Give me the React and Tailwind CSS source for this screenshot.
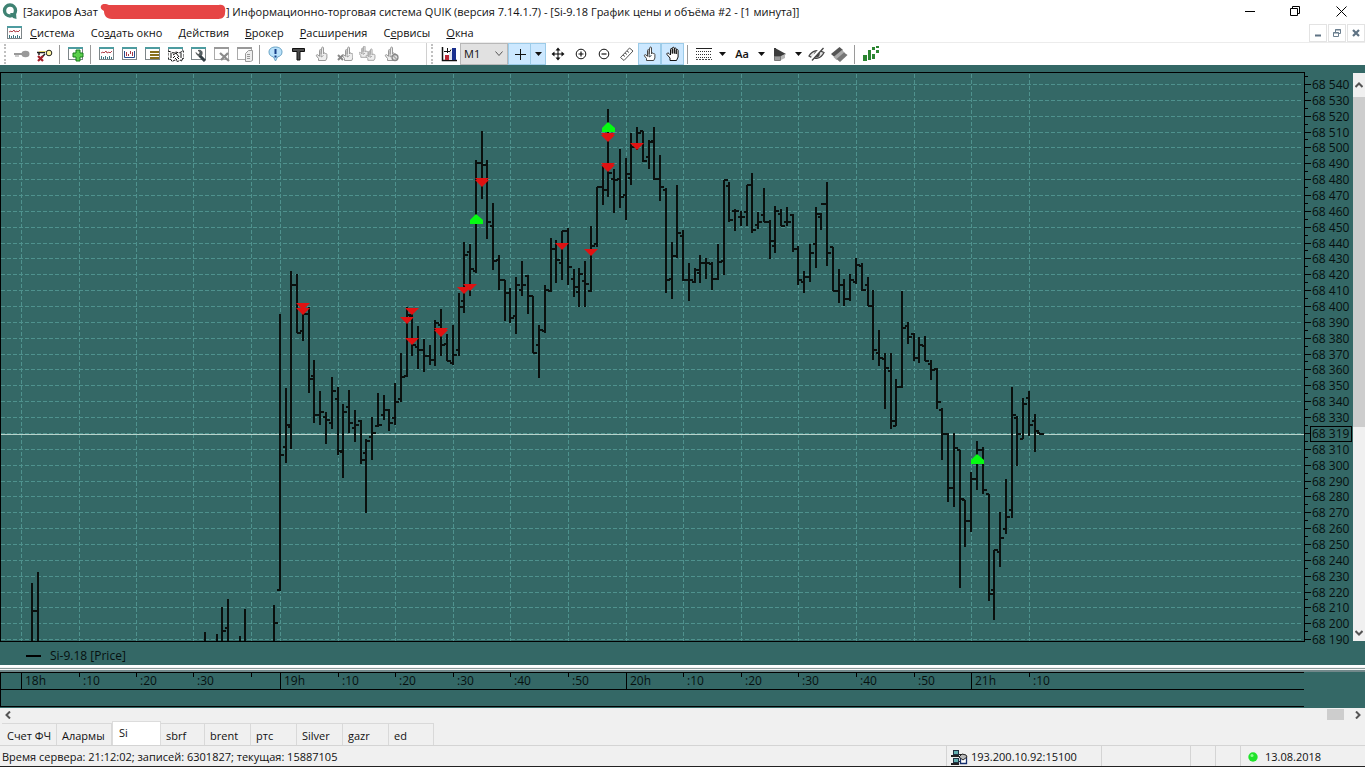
import React from "react";

/* [x, high, low, open, close] in plot pixels */
const BARS = [
  [32, 583, 642, null, 611], [38, 572, 642, 611, null], [205, 632, 642], [217, 634, 642], [222, 607, 642, null, 631],
  [228, 599, 642, 628, null], [240, 636, 642], [245, 609, 642], [274, 605, 642, null, 623],
  [280, 314, 591, 590, 455], [286, 388, 463, 447, 425], [291, 271, 449, 427, 285], [297, 274, 333, 285, 333],
  [303, 310, 341, 331, 314], [309, 307, 393, 314, 379], [314, 360, 423, 376, 415], [320, 391, 425, 415, 412],
  [326, 412, 444, 417, 420], [332, 377, 429, 423, 391], [338, 387, 455, 399, 451], [343, 404, 478, 452, 412],
  [349, 390, 433, 407, 423], [355, 410, 442, 428, 425], [361, 420, 464, 421, 460], [366, 439, 513, 453, 441],
  [372, 417, 460, 437, 433], [378, 393, 427, 426, 425], [384, 395, 420, 415, 410], [389, 409, 431, 410, 423],
  [395, 383, 425, 418, 402], [401, 353, 402, 399, 377], [407, 307, 377, 376, 315], [412, 313, 356, 316, 345],
  [418, 326, 369, 347, 350], [424, 339, 372, 350, 356], [430, 345, 365, 356, 360], [435, 320, 366, 360, 323],
  [441, 309, 356, 325, 345], [447, 334, 361, 344, 361], [453, 325, 365, 363, 355], [459, 293, 356, 350, 307],
  [464, 242, 313, 301, 255], [470, 244, 296, 252, 269], [476, 160, 273, 271, 163], [482, 131, 199, 163, 165],
  [487, 160, 239, 165, 222], [493, 203, 270, 226, 261], [499, 255, 290, 260, 280], [505, 280, 321, 280, 293],
  [510, 288, 323, 293, 318], [516, 277, 334, 316, 285], [522, 261, 296, 290, 285], [528, 275, 314, 276, 296],
  [533, 296, 353, 296, 353], [539, 325, 378, 345, 330], [545, 285, 333, 331, 290], [551, 238, 292, 291, 249],
  [556, 240, 283, 249, 260], [562, 231, 280, 263, 231], [568, 228, 285, 231, 267], [574, 269, 297, 279, 287],
  [579, 268, 307, 292, 274], [585, 261, 307, 281, 284], [591, 226, 292, 291, 246], [597, 187, 247, 244, 187],
  [603, 165, 205, 187, 190], [608, 109, 197, 190, 173], [614, 169, 213, 179, 180], [620, 149, 208, 179, 197],
  [626, 158, 220, 195, 174], [631, 133, 185, 178, 147], [637, 127, 150, 147, 133], [643, 131, 162, 131, 161],
  [649, 140, 169, 157, 142], [654, 127, 180, 141, 179], [660, 155, 201, 179, 187], [666, 188, 293, 190, 280],
  [672, 242, 299, 279, 256], [677, 185, 258, 256, 233], [683, 230, 281, 236, 280], [689, 263, 301, 280, 280],
  [695, 268, 283, 282, 270], [700, 255, 283, 273, 263], [706, 258, 279, 263, 263], [712, 262, 290, 264, 279],
  [718, 244, 280, 279, 262], [724, 180, 275, 261, 180], [729, 182, 222, 186, 220], [735, 209, 231, 211, 211],
  [741, 211, 226, 217, 217], [747, 185, 226, 212, 185], [752, 173, 233, 185, 230], [758, 212, 229, 225, 222],
  [764, 188, 222, 215, 222], [770, 220, 259, 222, 241], [775, 206, 253, 246, 211], [781, 209, 226, 214, 226],
  [787, 207, 226, 222, 222], [793, 214, 252, 215, 249], [798, 246, 285, 249, 280], [804, 271, 293, 282, 277],
  [810, 244, 282, 277, 253], [816, 207, 268, 244, 214], [821, 213, 230, 217, 204], [827, 182, 266, 204, 253],
  [833, 247, 291, 247, 291], [839, 269, 303, 291, 285], [844, 279, 306, 285, 299], [850, 274, 301, 299, 280],
  [856, 258, 284, 282, 265], [862, 263, 291, 266, 290], [868, 277, 306, 285, 306], [873, 290, 360, 306, 350],
  [879, 330, 366, 353, 358], [885, 353, 409, 359, 368], [891, 353, 429, 371, 421], [896, 379, 426, 426, 387],
  [902, 291, 388, 387, 328], [908, 322, 344, 326, 337], [914, 333, 361, 334, 358], [919, 337, 363, 358, 345],
  [925, 336, 361, 346, 361], [931, 360, 380, 364, 370], [937, 368, 409, 369, 402], [942, 408, 460, 410, 434],
  [948, 433, 502, 434, 488], [954, 433, 507, 488, 448], [960, 450, 588, 450, 499], [965, 500, 547, 500, 521],
  [971, 472, 532, 521, 479], [977, 441, 490, 479, 450], [983, 447, 494, 450, 490], [989, 494, 601, 494, 594],
  [994, 550, 620, 590, 550], [1000, 512, 567, 552, 538], [1006, 479, 534, 529, 517], [1012, 387, 518, 510, 415],
  [1017, 416, 466, 418, 434], [1023, 398, 439, 439, 404], [1029, 391, 436, 398, 425], [1035, 414, 452, 421, 431],
  [1040, 433, 435, 433, 434],
];

const BAR_PATH = BARS.map(([x, h, l, o, c]) => {
  let d = `M${x} ${h}V${l}`;
  if (o != null) d += `M${x - 3} ${o}H${x}`;
  if (c != null) d += `M${x} ${c}H${x + 4}`;
  return d;
}).join("");

const TIMES = [
  [21, "18h"], [79, ":10"], [136, ":20"], [193, ":30"], [251, ""], [280, "19h"], [338, ":10"], [395, ":20"],
  [453, ":30"], [510, ":40"], [568, ":50"], [626, "20h"], [683, ":10"], [741, ":20"], [798, ":30"], [856, ":40"],
  [914, ":50"], [971, "21h"], [1029, ":10"],
];

const PRICES = Array.from({ length: 36 }, (_, i) => ({
  y: Math.round(84 + i * 15.86),
  label: i === 22 ? "68 319" : `68 ${540 - i * 10}`,
}));

const SELLS = [
  [303, 303], [303, 308], [412, 308], [407, 317], [412, 338], [441, 328], [441, 330], [464, 287], [470, 284],
  [482, 178], [482, 180], [562, 243], [591, 249], [608, 133], [608, 135], [608, 163], [608, 165], [637, 143],
];
const BUYS = [[476, 214], [608, 122], [977, 454]];

function PricePlot() {
  return (
    <svg className="block h-[570px] min-w-0 flex-1" viewBox="0 72 1305 570" preserveAspectRatio="xMinYMin slice" role="img" aria-label="Si-9.18 [Price]">
      <g shapeRendering="crispEdges">
        <g stroke="#4f928e" strokeWidth="1" strokeDasharray="4 2">
          {PRICES.map((p) => <line key={p.y} x1="1" x2="1302" y1={p.y + 0.5} y2={p.y + 0.5} />)}
          {TIMES.map(([x]) => <line key={x} x1={x + 0.5} x2={x + 0.5} y1="74" y2="641" />)}
        </g>
        <path d="M0 434.5H1304" stroke="#b9d3cb" strokeWidth="1" />
        <path d={BAR_PATH} stroke="#0a100e" strokeWidth="2" fill="none" />
        <path d="M0.5 641V72.5H1304.5V641.5H0" stroke="#000" fill="none" />
      </g>
      {SELLS.map(([x, y]) => <path key={`${x}-${y}`} d={`M${x - 7} ${y}H${x + 7}L${x} ${y + 7}Z`} fill="#e01212" />)}
      {BUYS.map(([x, y]) => <path key={x} d={`M${x} ${y}L${x + 7} ${y + 6}V${y + 10}H${x - 6}V${y + 6}Z`} fill="#06fb12" />)}
    </svg>
  );
}

function PriceAxis() {
  return (
    <svg className="block h-[576px] w-12 shrink-0" viewBox="1305 72 48 576" role="img" aria-label="Шкала цены">
      <g shapeRendering="crispEdges" stroke="#000">
        {PRICES.map((p) => (
          <React.Fragment key={p.y}>
            <path d={`M1305 ${p.y + 0.5}h6`} />
            <path d={`M1305 ${p.y - 7.5}h3`} />
          </React.Fragment>
        ))}
        <path d="M1310.5 426.5h41v15h-41z" fill="none" />
      </g>
      {PRICES.map((p) => (
        <text key={p.y} x="1312" y={p.y + 5} fill="#06100f" className="font-['Open_Sans',sans-serif] text-[12px]">{p.label}</text>
      ))}
    </svg>
  );
}

function TimeAxis() {
  return (
    <svg className="block h-[36px] w-full" viewBox="0 672 1365 36" preserveAspectRatio="xMinYMin slice" role="img" aria-label="Шкала времени">
      <g shapeRendering="crispEdges" stroke="#000">
        <path d="M0.5 672V707M0 672.5H1304M0 689.5H1304M0 706.5H1304" fill="none" />
        {TIMES.map(([x, t]) => <path key={x} d={`M${x + 0.5} 672V${t.endsWith("h") ? 689 : 677}`} />)}
      </g>
      {TIMES.map(([x, t]) => (
        <text key={x} x={x + 4} y="685" fill="#06100f" className="font-['Open_Sans',sans-serif] text-[12px]">{t}</text>
      ))}
    </svg>
  );
}

function Icon({ children, w = 16 }) {
  return <svg width={w} height="16" viewBox={`0 0 ${w} 16`} fill="none" aria-hidden="true" className="block shrink-0">{children}</svg>;
}

const Frame = ({ c = "#7d8588", top = "#4d9ca0" }) => (
  <g shapeRendering="crispEdges">
    <rect x="0.5" y="1.5" width="14" height="12" fill="#fff" stroke={c} />
    <path d="M0 2h15" stroke={top} strokeWidth="2" />
  </g>
);

const HAND = "M4.500 14.500v-2L2.500 10c-.6-1.200.7-1.800 1.500-1l1.500 1.300V4.500c0-1.300 1.600-1.300 1.600 0V8l.6-6c0-1.300 1.800-1.300 1.800 0V8l.5-.8c.5-.6 1.400-.2 1.400.5.8-.4 1.500 0 1.500.8V12l-1.200 2.500zM7.100 8v3l2.400-1.500";
const ICONS = {
  chart: <Icon><Frame /><path d="M2 7l2-1 1 1 2-2 1 2 2-1 1 1 2-2" stroke="#b3474f" /><path d="M2.500 13v-3M4.500 13v-2M6.500 13v-3M8.500 13v-2M10.500 13v-3M12.500 13v-2" stroke="#3d7580" shapeRendering="crispEdges" /></Icon>,
  key: <Icon><path d="M0 8h9" stroke="#999" strokeWidth="2" /><path d="M2 9v2M4 9v2" stroke="#999" /><ellipse cx="11.500" cy="8" rx="4" ry="3.300" fill="#999" /></Icon>,
  keyx: <Icon w={17}><path d="M1 6.500h8M3 7v2M9 8l-3 3" stroke="#222" strokeWidth="1.500" /><path d="M3 5.500h7" stroke="#e1d36b" /><circle cx="13" cy="7" r="2.800" fill="#fff6a0" stroke="#222" /><path d="M2 10l5 5M7 10l-5 5" stroke="#a3202a" strokeWidth="2.200" /></Icon>,
  add: <Icon><Frame /><path d="M8 4h4v3h3v4h-3v4H8v-4H5V7h3z" fill="#5bd04c" stroke="#187c1c" /></Icon>,
  quotes: <Icon><Frame /><path d="M2.500 5v6.500h10V5" stroke="#254b8c" /><path d="M4.500 6v4M6.500 8v2M8.500 5v3M10.500 6v4" stroke="#a33848" shapeRendering="crispEdges" /></Icon>,
  table: <Icon><Frame /><path d="M5 6h9M5 9h9M5 12h9" stroke="#876f1e" strokeWidth="2" shapeRendering="crispEdges" /></Icon>,
  deal: <Icon><Frame /><path d="M0 5l3 1 2 1 3-1 3 1 2-1 3-1v7l-2 1v2l-2-1-2 1.500-3-1.500-3 1.500-1-2-3-1z" fill="#fff" stroke="#111" strokeDasharray="3 1" /><path d="M3 7v5M13 7v5M5 9l3-2 3 4M5 12l2-2M9 14l-2-2M11 13L9 11" stroke="#111" /></Icon>,
  wrench: <Icon><Frame /><path d="M14 15L8.500 9.500" stroke="#333f45" strokeWidth="3" /><path d="M5 6.500l2 2 1.500-.5L9 6 7 4.500c3-1 5 1 4 4-1 2.500-5 2-6-2z" fill="#59666b" stroke="#333" strokeWidth=".6" /></Icon>,
  delwin: <Icon><Frame c="#aaa" top="#999" /><path d="M6 7l9 8M14 7l-7 7" stroke="#8b8b8b" strokeWidth="2.300" /></Icon>,
  copywin: <Icon><Frame c="#aaa" top="#999" /><path d="M8.500 7.500l3-3h4v10l-2 1h-5z" fill="#eee" stroke="#999" /><path d="M10 8.500h3M10 10.500h3M10 12.500h3" stroke="#999" /></Icon>,
  alert: <Icon><path d="M7.500 1C3.500 1 1 3 1 6s2 4.300 4.500 5l2 4 2-4C12 10.300 14 9 14 6s-2.500-5-6.500-5z" fill="#b9e1fa" stroke="#6aa4c6" /><path d="M7.500 3v5" stroke="#173e87" strokeWidth="2" /><path d="M7.500 9.500v2" stroke="#173e87" strokeWidth="2" /></Icon>,
  text: <Icon><path d="M1.500 2.500h12v3H9v8.500H6V5.500H1.500z" fill="#4c4c4c" stroke="#111" /></Icon>,
  handg: <Icon><path d={HAND} fill="#eee" stroke="#999" /></Icon>,
  handx: <Icon><g transform="translate(3 0)"><path d={HAND} fill="#eee" stroke="#999" /></g><path d="M1 9l5 5M6 9l-5 5" stroke="#888" strokeWidth="2" /></Icon>,
  hands: <Icon w={17}><g transform="translate(-2 -1) scale(.85)"><path d={HAND} fill="#eee" stroke="#999" /></g><g transform="translate(5 2) scale(.85)"><path d={HAND} fill="#eee" stroke="#999" /></g></Icon>,
  hando: <Icon><path d={HAND} fill="#eee" stroke="#999" /><circle cx="12" cy="11.500" r="3" fill="#ddd" stroke="#888" strokeWidth="1.300" /><path d="M10 9.500l4 4" stroke="#888" /></Icon>,
  color: <Icon><path d="M1.500 1v13.500H16" stroke="#111" strokeWidth="1.500" /><path d="M11 2h4v12h-4z" fill="#1a2f8e" /><path d="M8 6h3v8H8z" fill="#dfe3ee" /><path d="M4 9h4v5H4z" fill="#bc2836" /><path d="M6.500 2v5M3 5.500h6l1-2" stroke="#111" /></Icon>,
  cross: <Icon><path d="M8.500 3v11M3 8.500h11" stroke="#111" shapeRendering="crispEdges" /></Icon>,
  move: <Icon><path d="M8 3v10M3 8h10" stroke="#000" /><path d="M8 1.500l2.500 3h-5zM8 14.500l2.500-3h-5zM1.500 8l3-2.500v5zM14.500 8l-3-2.500v5z" fill="#111" /></Icon>,
  zin: <Icon><circle cx="8" cy="8" r="4.800" stroke="#111" /><path d="M5.500 8h5M8 5.500v5" stroke="#111" strokeWidth="1.200" /></Icon>,
  zout: <Icon><circle cx="8" cy="8" r="4.800" stroke="#111" /><path d="M5.500 8h5" stroke="#111" strokeWidth="1.200" /></Icon>,
  ruler: <Icon><path d="M1.500 11.500L10.500 2l3.500 3L5 14.500z" fill="#fff" stroke="#555" /><path d="M4 9l2 1.500M6 7l2 1.500M8 5l2 1.500" stroke="#555" /></Icon>,
  hand1: <Icon><path d={HAND} fill="#fff" stroke="#444" /></Icon>,
  hand2: <Icon><path d="M5 14.500V12L2 8.500C1.500 7 3 6.500 4 7.500L5.500 9V3.500c0-1.400 1.800-1.400 1.800 0V7.500 2.300c0-1.400 2-1.400 2 0V7.500 3c0-1.400 1.900-1.400 1.900 0v5V4.500c0-1.400 1.900-1.400 1.900 0V11l-1.600 3.500z" fill="#fff" stroke="#111" /></Icon>,
  lines: <Icon><path d="M0 2.500h16" stroke="#222" shapeRendering="crispEdges" /><path d="M0 5.500h16M0 8.500h16M0 11.500h16" stroke="#333" strokeDasharray="1 1" shapeRendering="crispEdges" /><path d="M0 13.500h16" stroke="#444" strokeDasharray="2 1" shapeRendering="crispEdges" /></Icon>,
  shape: <Icon><path d="M3 2l11 6-6 3-4 2z" fill="#3c3c3c" /><path d="M3 2v10" stroke="#3c3c3c" strokeWidth="2" /><path d="M2.500 10.500h6v4h-6z" fill="#999" stroke="#777" /><path d="M9 10l4-2v4l-4 2z" fill="#b6b6b6" /></Icon>,
  eye: <Icon w={17}><path d="M1 10c3-5.500 9-7 15-3.500-3 6-9 8-15 3.500z" fill="#e4e4e4" stroke="#444" strokeWidth="1.300" /><path d="M7.500 5.500c-2.500 2-1.500 6 1 6s4-3 3-6z" fill="#444" /><path d="M14.500 1L2.500 14.500" stroke="#fff" strokeWidth="3" /><path d="M15.500 2L4 14.500" stroke="#444" strokeWidth="1.300" /></Icon>,
  layers: <Icon w={17}><path d="M0 8l8.500-7L12 4l-8 7.500z" fill="#555" /><path d="M2.500 11L11 4l3 3-8.500 7z" fill="#aaa" /><path d="M5.500 13L13 6.500 16.500 9 9 16z" fill="#777" /></Icon>,
  green: <Icon><g fill="#2b8531" shapeRendering="crispEdges"><path d="M0 9h4v6H0zM5 4h3v10H5zM9 8h3v5H9zM9 1h3v3H9zM13 0h3v2h-3zM13 4h3v3h-3z" /></g></Icon>,
};

const LEFT_TOOLS = [
  ["key", "Подключиться"], ["keyx", "Отключиться"], null, ["add", "Добавить"], null, ["chart", "График"],
  ["quotes", "Котировки"], ["table", "Таблица"], ["deal", "Сделки"], ["wrench", "Настройка"], ["delwin", "Удалить окно"],
  ["copywin", "Копировать окно"], null, ["alert", "Уведомления"], ["text", "Текст"], ["handg", "Заявка"],
  ["handx", "Снять заявку"], ["hands", "Заявки"], ["hando", "Стоп-заявка"],
];

function Tool({ name, label, active }) {
  return (
    <button aria-label={label} className={active
      ? "flex h-[22px] w-[23px] items-center justify-center border border-[#9ccbe8] bg-[#cce8ff]"
      : "flex h-[22px] w-[23px] items-center justify-center"}>
      {ICONS[name]}
    </button>
  );
}

const Sep = () => <span className="ml-[3px] mr-1 h-[19px] w-px bg-[#9a9a9a]" />;

function Grip() {
  return <span className="mx-1 h-5 w-0.5 border-l-2 border-dotted border-[#c0c0c0]" />;
}

function Arrow({ label, active }) {
  return (
    <button aria-label={label} className={active
      ? "flex h-[22px] w-[15px] items-center justify-center border border-l-0 border-[#9ccbe8] bg-[#cce8ff]"
      : "flex h-[22px] w-[14px] items-center justify-center"}>
      <svg width="7" height="4" viewBox="0 0 7 4"><path d="M0 0h7L3.500 4z" fill="#111" /></svg>
    </button>
  );
}

const MENU = [
  ["", "С", "истема"], ["Со", "з", "дать окно"], ["", "Д", "ействия"], ["", "Б", "рокер"],
  ["", "Р", "асширения"], ["С", "е", "рвисы"], ["", "О", "кна"],
];

const TABS = [
  ["Счет ФЧ", "w-[55px]"], ["Алармы", "w-[55px]"], ["Si", "w-[49px]"], ["sbrf", "w-[44px]"], ["brent", "w-[46px]"],
  ["ртс", "w-[46px]"], ["Silver", "w-[46px]"], ["gazr", "w-[46px]"], ["ed", "w-[45px]"],
];

export default function App() {
  return (
    <div className="flex min-h-screen flex-col overflow-hidden bg-[#f0f0f0] font-['Open_Sans','Noto_Sans',sans-serif] text-[11px] leading-4 text-[#111]">
      <header className="flex h-[23px] items-center bg-white">
        <svg className="ml-0.5 shrink-0" width="17" height="17" viewBox="0 0 17 17" aria-hidden="true">
          <circle cx="8" cy="7.500" r="5.500" fill="none" stroke="#3f8273" strokeWidth="3.400" />
          <path d="M8 10l6 0 .5 6-3.500-1z" fill="#3f8273" />
        </svg>
        <h1 className="ml-1 flex items-center whitespace-nowrap">
          <span>[Закиров Азат</span>
          <svg className="ml-0.5 shrink-0" width="126" height="17" viewBox="0 0 126 17" aria-hidden="true">
            <path d="M1 3C2 0 7 1 9 2h110c6-1 7 4 6 8 0 5-4 6-8 6H12C6 16 4 12 4 8 2 7 0 5 1 3z" fill="#e64545" />
          </svg>
          <span>] Информационно-торговая система QUIK (версия 7.14.1.7) - [Si-9.18 График цены и объёма #2 - [1 минута]]</span>
        </h1>
        <div className="ml-auto flex">
          <button aria-label="Свернуть" className="flex h-5 w-[46px] items-center justify-center"><svg width="11" height="11"><path d="M0 5.500h10" stroke="#000" /></svg></button>
          <button aria-label="Восстановить" className="flex h-5 w-[45px] items-center justify-center"><svg width="11" height="11" fill="none" stroke="#000"><path d="M.5 2.500h7v7h-7zM2.500 2V.5h7v7H8" /></svg></button>
          <button aria-label="Закрыть" className="mr-px flex h-5 w-[46px] items-center justify-center"><svg width="11" height="11"><path d="M.5.5l10 10M10.500.5l-10 10" stroke="#000" /></svg></button>
        </div>
      </header>

      <nav className="flex h-5 items-center border-b border-[#ececec] bg-white pl-[7px]">
        {ICONS.chart}
        <div className="ml-[7px] flex gap-4">
          {MENU.map(([a, u, b]) => (
            <a key={u + b} href="#" className="whitespace-nowrap">{a}<u>{u}</u>{b}</a>
          ))}
        </div>
        <div className="ml-auto flex gap-px">
          <button aria-label="Свернуть окно" className="flex h-[18px] w-[18px] items-center justify-center border border-[#e3e3e3]"><svg width="8" height="8"><path d="M1 6.500h6" stroke="#5f7384" strokeWidth="2" /></svg></button>
          <button aria-label="Восстановить окно" className="flex h-[18px] w-[18px] items-center justify-center border border-[#e3e3e3]"><svg width="9" height="8" fill="none" stroke="#6b7e8e"><path d="M.5 3.500h5v4h-5zM0 4h6M2.500 3V.5h5v4H6M2 1h6" /></svg></button>
          <button aria-label="Закрыть окно" className="flex h-[18px] w-[18px] items-center justify-center border border-[#e3e3e3]"><svg width="8" height="8"><path d="M1 1l6 6M7 1L1 7" stroke="#5f7384" strokeWidth="2.200" /></svg></button>
        </div>
      </nav>

      <div className="flex h-[22px] items-center bg-white">
        <div className="flex w-[427px] items-center border-r border-[#d0d0d0]">
          <Grip />
          {LEFT_TOOLS.map((t, i) => (t ? <Tool key={t[0]} name={t[0]} label={t[1]} /> : <Sep key={i} />))}
        </div>
        <Grip />
        <Tool name="color" label="Вид графика" />
        <label className="relative block">
          <select aria-label="Интервал" className="block h-[22px] w-12 appearance-none border border-[#b8b8b8] bg-[#e1e1e1] pl-[3px] text-[11px] leading-4">
            <option>M1</option>
          </select>
          <svg className="pointer-events-none absolute right-[5px] top-2" width="8" height="6" fill="none" stroke="#555"><path d="M.5.5L4 4.500 7.500.5" /></svg>
        </label>
        <Tool name="cross" label="Перекрестие" active />
        <Arrow label="Вид курсора" active />
        <Tool name="move" label="Переместить" />
        <Tool name="zin" label="Увеличить" />
        <Tool name="zout" label="Уменьшить" />
        <Tool name="ruler" label="Линейка" />
        <Tool name="hand1" label="Заявки" active />
        <Tool name="hand2" label="Рука" active />
        <Sep />
        <Tool name="lines" label="Линии" />
        <Arrow label="Выбор линии" />
        <button aria-label="Шрифт" className="ml-px h-[22px] w-6 text-[11px] font-semibold">Aa</button>
        <Arrow label="Выбор шрифта" />
        <Tool name="shape" label="Фигуры" />
        <Arrow label="Выбор фигуры" />
        <Tool name="eye" label="Скрыть" />
        <Tool name="layers" label="Слои" />
        <Sep />
        <Tool name="green" label="Индикаторы" />
      </div>

      <main className="flex flex-col bg-[#346866] pt-[7px]">
        <div className="flex">
          <PricePlot />
          <PriceAxis />
          <div className="mb-[7px] mt-px flex w-3 shrink-0 flex-col bg-[#f0f0f0]">
            <button aria-label="Вверх" className="flex h-6 items-center justify-center"><svg width="8" height="6" fill="none" stroke="#555" strokeWidth="2"><path d="M.5 5L4 1.500 7.500 5" /></svg></button>
            <div className="h-[330px] bg-[#cdcdcd]" />
            <button aria-label="Вниз" className="mt-auto flex h-4 items-center justify-center"><svg width="8" height="6" fill="none" stroke="#555" strokeWidth="2"><path d="M.5 1L4 4.500 7.500 1" /></svg></button>
          </div>
        </div>
        <div className="flex h-[17px] items-center gap-[9px] pb-px pl-[26px] text-[12px] text-[#06100f]">
          <span className="h-0.5 w-[15px] bg-black" />
          <span>Si-9.18 [Price]</span>
        </div>
        <div className="h-[7px] border-b-2 border-t-2 border-b-[#71888a] border-t-white bg-[#f4f4f4] pt-px"><div className="h-px bg-[#8a9a9a]" /></div>
        <TimeAxis />
      </main>

      <div className="flex h-[13px] items-center bg-[#f0f0f0]">
        <button aria-label="Влево" className="flex w-4 justify-center"><svg width="6" height="8" fill="none" stroke="#555" strokeWidth="2"><path d="M5 .5L1.500 4 5 7.500" /></svg></button>
        <div className="ml-auto mr-[11px] h-[11px] w-[17px] bg-[#cdcdcd]" />
        <button aria-label="Вправо" className="mr-1 flex"><svg width="6" height="8" fill="none" stroke="#555" strokeWidth="2"><path d="M1 .5L4.500 4 1 7.500" /></svg></button>
      </div>

      <div className="flex h-[25px] items-end border-b border-[#d4d4d4] pl-0.5" role="tablist">
        {TABS.map(([t, w]) => (
          <button key={t} role="tab" aria-selected={t === "Si"} className={`${w} ${t === "Si"
            ? "flex h-6 items-start border border-b-0 border-[#dcdcdc] bg-white pl-1.5 pt-[3px]"
            : "flex h-[22px] items-center border-r border-t border-[#d9d9d9] pl-[5px] pt-0.5"}`}>
            <span className="whitespace-nowrap">{t}</span>
          </button>
        ))}
      </div>

      <footer className="flex h-[21px] items-stretch border-b border-[#222]">
        <div className="flex flex-1 items-center whitespace-nowrap pl-0.5 pt-0.5">Время сервера: 21:12:02; записей: 6301827; текущая: 15887105</div>
        <div className="flex w-[155px] items-center gap-[3px] border-l border-[#d4d4d4] pl-1 pt-0.5">
          <svg width="17" height="16" viewBox="0 0 17 16" aria-hidden="true">
            <g shapeRendering="crispEdges">
              <path d="M2 1h5v4H2zM2 9h5v4H2z" fill="#63b0b0" stroke="#234" />
              <path d="M0 6h8v1.500H0zM0 14h8v1.500H0z" fill="#222" />
              <path d="M8 5h3M8 12h2" stroke="#222" />
            </g>
            <path d="M9.500 8v6.500h6V8" fill="#fff" stroke="#17306e" strokeWidth="1.300" />
            <path d="M8 8l3-3 4 1 1 2-4 3z" fill="#bbb" stroke="#222" />
          </svg>
          193.200.10.92:15100
        </div>
        <div className="w-[89px] border-l border-[#d4d4d4]" />
        <div className="w-[25px] border-l border-[#d4d4d4]" />
        <div className="w-[25px] border-l border-[#d4d4d4]" />
        <div className="flex w-[125px] items-center gap-[7px] border-l border-[#d4d4d4] pl-[7px] pt-0.5">
          <svg width="10" height="10" aria-hidden="true"><circle cx="5" cy="5" r="4.700" fill="#1fe32a" /><circle cx="4" cy="3.500" r="1.500" fill="#8dff8d" /></svg>
          13.08.2018
        </div>
      </footer>
    </div>
  );
}
